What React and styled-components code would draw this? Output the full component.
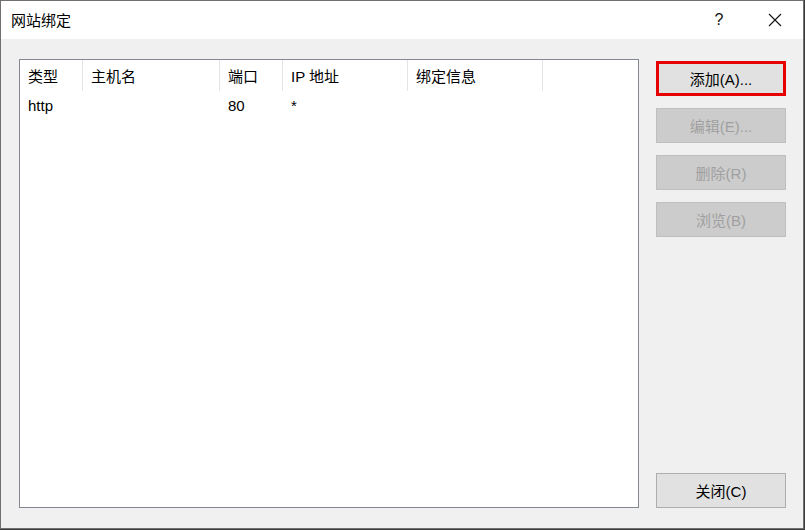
import React from "react";
import styled, { createGlobalStyle } from "styled-components";

const GlobalStyle = createGlobalStyle`
  html, body {
    margin: 0;
    padding: 0;
    background: #3a3a3a;
    font-family: "Noto Sans CJK SC", "Noto Sans", sans-serif;
  }
`;

const Window = styled.div`
  width: 802px;
  height: 527px;
  border: 1px solid #707070;
  background: #f0f0f0;
  display: flex;
  flex-direction: column;
`;

const TitleBar = styled.div`
  height: 38px;
  background: #ffffff;
  display: flex;
  align-items: center;
  padding-left: 10px;
  font-size: 15px;
  color: #000;
`;

const Title = styled.div`
  flex: 1;
  margin-top: -2px;
`;

const TitleButton = styled.div`
  width: 56px;
  height: 38px;
  display: flex;
  align-items: center;
  justify-content: center;
  font-family: "Liberation Sans", sans-serif;
  font-size: 16px;
  color: #111;
`;

const Body = styled.div`
  flex: 1;
  display: flex;
  gap: 17px;
  padding: 20px 17px 20px 18px;
`;

const ListBox = styled.div`
  width: 618px;
  border: 1px solid #828790;
  background: #ffffff;
  font-size: 15px;
  color: #000;
`;

const Row = styled.div`
  display: flex;
  height: ${(p) => (p.$header ? "31px" : "24px")};
  margin-top: ${(p) => (p.$header ? "0" : "2px")};
  align-items: center;
`;

const Cell = styled.div`
  width: ${(p) => p.$w}px;
  height: 100%;
  box-sizing: border-box;
  padding-left: 8px;
  display: flex;
  align-items: center;
  border-right: ${(p) => (p.$header ? "1px solid #e5e5e5" : "none")};
  font-family: "Liberation Sans", "Noto Sans CJK SC", sans-serif;
`;

const Side = styled.div`
  width: 130px;
  display: flex;
  flex-direction: column;
  gap: 12px;
  padding-top: 2px;
`;

const Button = styled.div`
  height: 35px;
  box-sizing: border-box;
  display: flex;
  align-items: center;
  justify-content: center;
  font-size: 15px;
  font-family: "Liberation Sans", "Noto Sans CJK SC", sans-serif;
  background: ${(p) => (p.$disabled ? "#cccccc" : "#e1e1e1")};
  border: ${(p) =>
    p.$focus
      ? "3px solid #e60000"
      : p.$disabled
      ? "1px solid #bfbfbf"
      : "1px solid #adadad"};
  color: ${(p) => (p.$disabled ? "#a0a0a0" : "#000")};
`;

const Spacer = styled.div`
  flex: 1;
`;

const columns = [
  { label: "类型", w: 63 },
  { label: "主机名", w: 137 },
  { label: "端口", w: 63 },
  { label: "IP 地址", w: 125 },
  { label: "绑定信息", w: 135 },
];

const rows = [["http", "", "80", "*", ""]];

function CloseIcon() {
  return (
    <svg width="14" height="14" viewBox="0 0 14 14">
      <path d="M1 1 L13 13 M13 1 L1 13" stroke="#111" strokeWidth="1.1" />
    </svg>
  );
}

export default function App() {
  return (
    <>
      <GlobalStyle />
      <Window>
        <TitleBar>
          <Title>网站绑定</Title>
          <TitleButton>?</TitleButton>
          <TitleButton>
            <CloseIcon />
          </TitleButton>
        </TitleBar>
        <Body>
          <ListBox>
            <Row $header>
              {columns.map((c) => (
                <Cell key={c.label} $w={c.w} $header>
                  {c.label}
                </Cell>
              ))}
            </Row>
            {rows.map((r, i) => (
              <Row key={i}>
                {r.map((v, j) => (
                  <Cell key={j} $w={columns[j].w}>
                    {v}
                  </Cell>
                ))}
              </Row>
            ))}
          </ListBox>
          <Side>
            <Button $focus>添加(A)...</Button>
            <Button $disabled>编辑(E)...</Button>
            <Button $disabled>删除(R)</Button>
            <Button $disabled>浏览(B)</Button>
            <Spacer />
            <Button>关闭(C)</Button>
          </Side>
        </Body>
      </Window>
    </>
  );
}
